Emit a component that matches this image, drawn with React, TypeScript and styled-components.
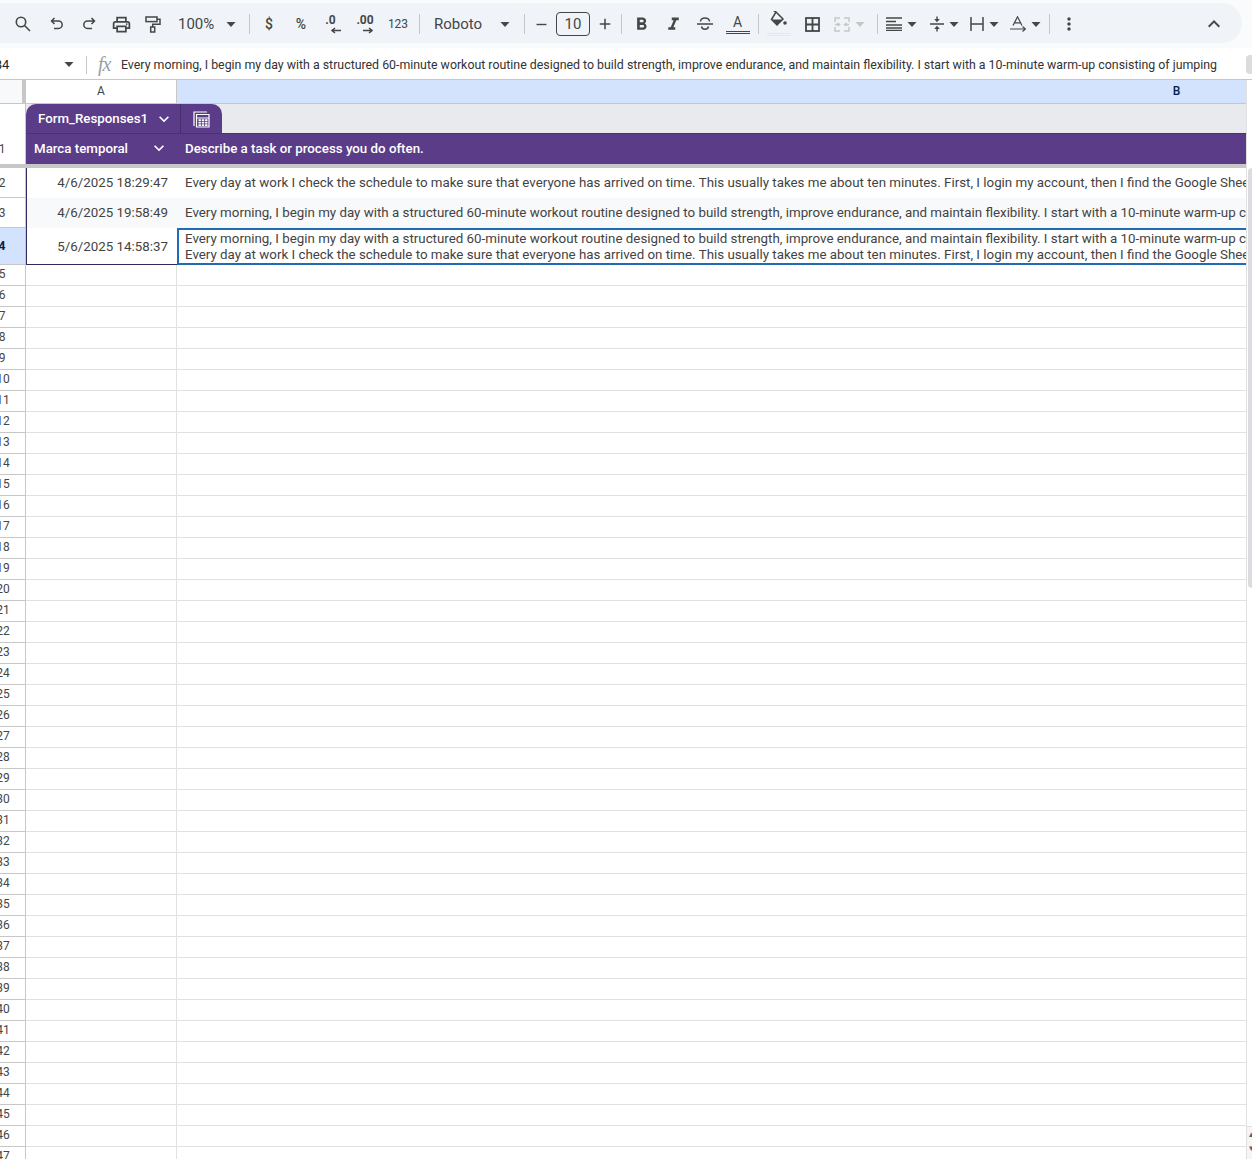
import React from "react";
import styled, { createGlobalStyle } from "styled-components";
import { MdOutlinePrint, MdFormatBold, MdFormatItalic, MdMoreVert, MdKeyboardArrowUp, MdKeyboardArrowDown, MdAdd, MdRemove } from "react-icons/md";

const INK = "#444746";
const PURPLE = "#5b3c88";
const LINE = "#e1e1e1";
const GUTTER_LINE = "#c7c7c7";

const Global = createGlobalStyle`
  html, body { margin: 0; padding: 0; background: #f9fbfd; }
  body { font-family: Roboto, "Liberation Sans", sans-serif; color: #444746; }
`;

const Page = styled.div`
  width: 1252px; height: 1159px; overflow: hidden; display: flex; flex-direction: column; background: #f9fbfd;
`;
const ToolbarWrap = styled.div`
  height: 48px; padding: 3px 10px 5px 0; box-sizing: border-box; flex: none;
`;
const Toolbar = styled.div`
  height: 40px; box-sizing: border-box; border-radius: 0 20px 20px 0; background: #f0f4f9; display: flex; align-items: center; padding: 2px 12px 0 7px;
`;
const Tool = styled.div<{ $w?: number; $disabled?: boolean }>`
  width: ${p => p.$w ?? 32}px; height: 32px; flex: none; display: flex; align-items: center; justify-content: center; color: ${p => p.$disabled ? "#c4c7c5" : INK};
`;
const SearchTool = styled(Tool)`
  margin-right: 2px;
`;
const Glyph = styled(Tool)<{ $size?: number; $weight?: number }>`
  font-size: ${p => p.$size ?? 14}px; font-weight: ${p => p.$weight ?? 400};
`;
const DecimalTool = styled(Tool)`
  flex-direction: column; gap: 1px; font-size: 12px; font-weight: 700; line-height: 11px; box-sizing: border-box;
`;
const DecimalText = styled.span<{ $shift: number }>`
  margin-right: ${p => p.$shift}px;
`;
const Select = styled.div<{ $w: number; $pad: number; $gap: number }>`
  width: ${p => p.$w}px; height: 32px; flex: none; box-sizing: border-box; padding-left: ${p => p.$pad}px; display: flex; align-items: center; gap: ${p => p.$gap}px; font-size: 15px; color: ${INK};
`;
const Sep = styled.div<{ $l: number; $r: number }>`
  width: 1px; height: 20px; background: #c7c7c7; flex: none; margin: 0 ${p => p.$r}px 0 ${p => p.$l}px;
`;
const SizeBox = styled.div`
  width: 34px; height: 24px; box-sizing: border-box; border: 1px solid ${INK}; border-radius: 4px; flex: none; display: flex; align-items: center; justify-content: center; font-size: 15px; color: ${INK}; margin: 0 1px;
`;
const Dropdown = styled.div<{ $w: number; $disabled?: boolean }>`
  width: ${p => p.$w}px; height: 32px; flex: none; display: flex; align-items: center; padding-left: 5px; box-sizing: border-box; gap: 5px; color: ${p => p.$disabled ? "#c4c7c5" : INK};
`;
const ColorA = styled.div`
  display: flex; flex-direction: column; align-items: center; width: 32px; font-size: 14px; line-height: 14px; color: ${INK};
`;
const ColorBar = styled.div`
  width: 24px; height: 1px; margin: 2px 0; background: ${INK}; box-shadow: 0 2px 0 ${INK};
`;
const Collapse = styled(Tool)`
  margin-left: auto;
`;

const FormulaBar = styled.div`
  height: 32px; flex: none; display: flex; align-items: center; background: #fff; position: relative; border-bottom: 1px solid #c4c7c5; box-sizing: border-box; padding-top: 2px;
`;
const NameBox = styled.div`
  width: 86px; flex: none; display: flex; align-items: center; justify-content: space-between; padding-right: 12px; box-sizing: border-box; font-size: 13px; overflow: hidden; color: #1f1f1f;
`;
const NameText = styled.span`
  margin-left: -6px;
`;
const FxSep = styled.div`
  width: 1px; height: 18px; background: #c7c7c7; flex: none;
`;
const Fx = styled.span`
  font-family: "Liberation Serif", serif; font-style: italic; font-size: 20px; line-height: 18px; color: #9aa0a6; width: 34px; flex: none; text-align: left; padding: 0 0 2px 11px; box-sizing: border-box; letter-spacing: -1px;
`;
const FormulaText = styled.div`
  flex: 1; min-width: 0; font-size: 12.36px; color: #333; white-space: nowrap; overflow: hidden;
`;
const ExpandHandle = styled.div`
  width: 6px; height: 19px; background: #dadce0; border-radius: 4px 0 0 4px; flex: none;
`;

const Body = styled.div`
  flex: 1; display: flex; min-height: 0;
`;
const Sheet = styled.div`
  flex: 1; min-width: 0; overflow: hidden; background: #fff;
`;
const Rail = styled.div`
  width: 6px; flex: none; background: #fff; border-left: 1px solid ${LINE}; box-sizing: border-box; display: flex; flex-direction: column;
`;
const Thumb = styled.div`
  margin: 88px 0 0 1px; height: 420px; background: #dadce0; border-radius: 4px 0 0 4px; flex: none;
`;
const RailArrow = styled.div`
  margin-top: auto; height: 32px; border-top: 1px solid ${LINE}; background: #f5f5f5; font-size: 9px; line-height: 14px; color: #5f6368; padding-left: 2px; overflow: hidden;
`;

const Row = styled.div<{ $h: number }>`
  display: flex; height: ${p => p.$h}px; width: 2246px;
`;
const Gutter = styled.div<{ $state?: "selected" | "plain"; $line?: boolean }>`
  width: 26px; flex: none; box-sizing: border-box; overflow: hidden; display: flex; align-items: center; justify-content: flex-start;
  font-size: 12px; background: ${p => p.$state === "selected" ? "#d3e3fd" : "#fff"};
  font-weight: ${p => p.$state === "selected" ? 700 : 400};
  color: ${p => p.$state === "selected" ? "#041e49" : INK};
  border-right: 1px solid ${GUTTER_LINE};
  border-bottom: ${p => p.$line === false ? "none" : `1px solid ${GUTTER_LINE}`};
`;
const GutterNum = styled.span<{ $lift?: boolean; $wide?: boolean }>`
  flex: none; width: 50px; margin: ${p => p.$lift ? "-2px" : "0"} 0 0 ${p => p.$wide ? "-22px" : "-23px"}; text-align: center;
`;
const CornerCell = styled.div`
  width: 26px; flex: none; box-sizing: border-box; background: #f8f9fa; border-right: 4px solid ${GUTTER_LINE}; border-bottom: 1px solid ${GUTTER_LINE};
`;
const ColHead = styled.div<{ $w: number; $on?: boolean }>`
  width: ${p => p.$w}px; flex: none; box-sizing: border-box; display: flex; align-items: center; justify-content: center;
  font-size: 12px; padding-bottom: 1px; border-bottom: 1px solid ${GUTTER_LINE}; border-right: 1px solid ${GUTTER_LINE};
  background: ${p => p.$on ? "#d3e3fd" : "#fff"}; color: ${p => p.$on ? "#041e49" : INK}; font-weight: ${p => p.$on ? 500 : 400};
`;
const TitleBand = styled.div`
  flex: 1; background: #e8eaed; display: flex;
`;
const TableTab = styled.div`
  width: 196px; height: 29px; background: ${PURPLE}; border-radius: 10px 10px 0 0; display: flex; color: #fff; flex: none;
`;
const TabName = styled.div`
  width: 155px; flex: none; box-sizing: border-box; border-right: 1px solid #46306c; display: flex; align-items: center; padding-left: 12px; font-size: 13.3px; font-weight: 500; gap: 6px;
`;
const TabIcon = styled.div`
  flex: 1; display: flex; align-items: center; justify-content: center; padding-top: 1px;
`;
const HeadCell = styled.div<{ $w: number }>`
  width: ${p => p.$w}px; flex: none; box-sizing: border-box; background: ${PURPLE}; color: #fff; font-size: 13.3px; font-weight: 500; padding: 0 8px 2px; display: flex; align-items: center; justify-content: space-between; border-top: 1px solid #4a3170; white-space: nowrap;
`;
const FreezeBand = styled.div`
  height: 4px; background: #c7c7c7; flex: none; width: 100%;
`;
const TableCell = styled.div<{ $alt?: boolean; $w: number; $right?: boolean; $end?: boolean }>`
  width: ${p => p.$w}px; flex: none; box-sizing: border-box; padding: ${p => p.$end ? "2px" : "0"} ${p => p.$right ? "9px" : "8px"} 0 8px; background: ${p => p.$alt ? "#f8f9fa" : "#fff"};
  font-size: 13.33px; line-height: 16px; color: #434343; white-space: nowrap; overflow: hidden; display: flex; flex-direction: column; justify-content: center;
  text-align: ${p => p.$right ? "right" : "left"};
  border-left: ${p => p.$right ? "1px solid #35285f" : "none"};
  border-bottom: ${p => p.$end ? "1px solid #35285f" : "none"};
`;
const ActiveCell = styled(TableCell)`
  border: 2px solid #1f6cb5; padding: 0 6px; background: #fff;
`;
const EmptyCell = styled.div<{ $w: number }>`
  width: ${p => p.$w}px; flex: none; box-sizing: border-box; border-right: 1px solid ${LINE}; border-bottom: 1px solid ${LINE};
`;

const Caret = () => (
  <svg width="10" height="5" viewBox="0 0 10 5"><path d="M0.5 0 H9.5 L5 5 Z" fill={INK} /></svg>
);
const GreyCaret = () => (
  <svg width="10" height="5" viewBox="0 0 10 5"><path d="M0.5 0 H9.5 L5 5 Z" fill="#c4c7c5" /></svg>
);
const Stroke: React.FC<{ w: number; h: number; children: React.ReactNode; c?: string; sw?: number }> = ({ w, h, children, c = INK, sw = 1.5 }) => (
  <svg width={w} height={h} viewBox={`0 0 ${w} ${h}`} fill="none" stroke={c} strokeWidth={sw}>{children}</svg>
);

const FILL = "Every morning, I begin my day with a structured 60-minute workout routine designed to build strength, improve endurance, and maintain flexibility. I start with a 10-minute warm-up consisting of jumping";
const WORK = "Every day at work I check the schedule to make sure that everyone has arrived on time. This usually takes me about ten minutes. First, I login my account, then I find the Google Sheet where the schedule is stored and check each name";
const EMPTY = Array.from({ length: 43 }, (_, i) => i + 5);

export default function App() {
  return (
    <Page>
      <Global />
      <ToolbarWrap>
        <Toolbar>
          <SearchTool>
            <Stroke w={16} h={16} sw={1.6}><circle cx="6" cy="6" r="4.7" /><path d="M9.5 9.5 L15 15" /></Stroke>
          </SearchTool>
          <Tool>
            <Stroke w={14} h={14}><path d="M4.5 1 L1.5 4 L4.5 7 M1.5 4 H8.5 a3.6 3.6 0 0 1 0 7.4 H4" /></Stroke>
          </Tool>
          <Tool>
            <Stroke w={14} h={14}><path d="M9.5 1 L12.5 4 L9.5 7 M12.5 4 H5.5 a3.6 3.6 0 0 0 0 7.4 H10" /></Stroke>
          </Tool>
          <Tool><MdOutlinePrint size={21} /></Tool>
          <Tool>
            <Stroke w={16} h={17}><rect x="1" y="1" width="11" height="4.6" /><path d="M12 3.2 H15 V8.2 H7.7 V11" /><rect x="5.7" y="11" width="4" height="5" /></Stroke>
          </Tool>
          <Select $w={73} $pad={9} $gap={12}>100%<Caret /></Select>
          <Sep $l={7} $r={3} />
          <Glyph $size={14} $weight={500}>$</Glyph>
          <Glyph $size={14} $weight={500}>%</Glyph>
          <DecimalTool>
            <DecimalText $shift={5}>.0</DecimalText>
            <Stroke w={16} h={7}><path d="M16 3.5 H7 M10 1 L7 3.5 L10 6" /></Stroke>
          </DecimalTool>
          <DecimalTool>
            <DecimalText $shift={0}>.00</DecimalText>
            <Stroke w={16} h={7}><path d="M6 3.5 H15 M12 1 L15 3.5 L12 6" /></Stroke>
          </DecimalTool>
          <Glyph $w={34} $size={12}>123</Glyph>
          <Sep $l={4} $r={4} />
          <Select $w={94} $pad={10} $gap={18}>Roboto<Caret /></Select>
          <Sep $l={6} $r={2} />
          <Tool $w={28}><MdRemove size={17} /></Tool>
          <SizeBox>10</SizeBox>
          <Tool $w={28}><MdAdd size={18} /></Tool>
          <Sep $l={2} $r={3} />
          <Tool><MdFormatBold size={21} /></Tool>
          <Tool><MdFormatItalic size={21} /></Tool>
          <Tool>
            <Stroke w={18} h={14}><path d="M1 7 H17 M4.5 4.5 a4.5 3.6 0 0 1 9 0 M5.5 9.5 a3.6 3.6 0 0 0 7 0" /></Stroke>
          </Tool>
          <Tool $w={33}><ColorA>A<ColorBar /></ColorA></Tool>
          <Sep $l={4} $r={4} />
          <Tool>
            <svg width="24" height="26" viewBox="0 0 24 26">
              <path d="M10 2 L6.5 -0.5 M9 1 L16 8 L10 14 L4.5 8.5 Z" fill="none" stroke={INK} strokeWidth="1.5" />
              <path d="M5 8.5 H15.5 L10 14 Z" fill={INK} />
              <circle cx="18" cy="12" r="1.8" fill={INK} />
              <path d="M0 22.5 H24 M0 24.5 H24" stroke="#e6e8ea" strokeWidth="1" />
            </svg>
          </Tool>
          <Tool $w={34}>
            <Stroke w={15} h={15} sw={1.8}><rect x="1" y="1" width="13" height="13" /><path d="M7.5 1 V14 M1 7.5 H14" /></Stroke>
          </Tool>
          <Dropdown $w={47} $disabled>
            <Stroke w={16} h={15} c="#c4c7c5"><path d="M6 1 H1 V5 M1 10 V14 H6 M10 1 H15 V5 M15 10 V14 H10 M1 7.5 H5 M3.5 6 L5.5 7.5 L3.5 9 M15 7.5 H11 M12.5 6 L10.5 7.5 L12.5 9" /></Stroke>
            <GreyCaret />
          </Dropdown>
          <Sep $l={1} $r={3} />
          <Dropdown $w={44}>
            <Stroke w={16} h={14} sw={1.5}><path d="M0 1 H16 M0 4.5 H10 M0 8 H16 M0 11 H16 M0 13.5 H16" /></Stroke>
            <Caret />
          </Dropdown>
          <Dropdown $w={40}>
            <svg width="14" height="16" viewBox="0 0 14 16">
              <path d="M0 8 H14 M7 0.5 V3 M7 15.5 V13" stroke={INK} strokeWidth="1.4" fill="none" />
              <path d="M4.2 3 H9.8 L7 6.2 Z M4.2 13 H9.8 L7 9.8 Z" fill={INK} />
            </svg>
            <Caret />
          </Dropdown>
          <Dropdown $w={40}>
            <Stroke w={14} h={14}><path d="M1 0 V14 M13 0 V14 M1 7 H13" /></Stroke>
            <Caret />
          </Dropdown>
          <Dropdown $w={40}>
            <Stroke w={16} h={16} sw={1.2}><path d="M3 9.5 L7.5 0.8 L12 9.5 M4.5 6.8 H10.5 M0 13 H15 M12.5 10.5 L15.5 13 L12.5 15.5" /></Stroke>
            <Caret />
          </Dropdown>
          <Sep $l={4} $r={3} />
          <Tool><MdMoreVert size={20} /></Tool>
          <Collapse><MdKeyboardArrowUp size={24} /></Collapse>
        </Toolbar>
      </ToolbarWrap>

      <FormulaBar>
        <NameBox><NameText>B4</NameText><Caret /></NameBox>
        <FxSep />
        <Fx>fx</Fx>
        <FormulaText>{FILL}</FormulaText>
        <ExpandHandle />
      </FormulaBar>

      <Body>
        <Sheet>
          <Row $h={24}>
            <CornerCell />
            <ColHead $w={151}>A</ColHead>
            <ColHead $w={2000} $on>B</ColHead>
          </Row>
          <Row $h={29}>
            <Gutter $line={false} />
            <TitleBand>
              <TableTab>
                <TabName>Form_Responses1<MdKeyboardArrowDown size={20} /></TabName>
                <TabIcon>
                  <svg width="17" height="17" viewBox="0 0 17 17" fill="none" stroke="#fff">
                    <path d="M1 15 V1 H14" strokeWidth="1.2" />
                    <path d="M3.5 3.5 H16 V16 H3.5 Z M3.5 7 H16" strokeWidth="1.2" />
                    <path d="M5.5 9.2 H14.5 M5.5 11.7 H14.5 M5.5 14.2 H14.5" strokeWidth="1.7" strokeDasharray="2.4 0.9" />
                  </svg>
                </TabIcon>
              </TableTab>
            </TitleBand>
          </Row>
          <Row $h={31}>
            <Gutter $line={false}><GutterNum>1</GutterNum></Gutter>
            <HeadCell $w={151}>Marca temporal<MdKeyboardArrowDown size={20} /></HeadCell>
            <HeadCell $w={2000}>Describe a task or process you do often.</HeadCell>
          </Row>
          <FreezeBand />
          <Row $h={30}>
            <Gutter><GutterNum>2</GutterNum></Gutter>
            <TableCell $w={151} $right>4/6/2025 18:29:47</TableCell>
            <TableCell $w={2000}>{WORK}</TableCell>
          </Row>
          <Row $h={30}>
            <Gutter><GutterNum>3</GutterNum></Gutter>
            <TableCell $w={151} $right $alt>4/6/2025 19:58:49</TableCell>
            <TableCell $w={2000} $alt>{FILL}</TableCell>
          </Row>
          <Row $h={37}>
            <Gutter $state="selected"><GutterNum>4</GutterNum></Gutter>
            <TableCell $w={151} $right $end>5/6/2025 14:58:37</TableCell>
            <ActiveCell $w={2000}>
              <span>{FILL}</span>
              <span>{WORK}</span>
            </ActiveCell>
          </Row>
          {EMPTY.map(n => (
            <Row key={n} $h={21}>
              <Gutter><GutterNum $lift $wide={n >= 10}>{n}</GutterNum></Gutter>
              <EmptyCell $w={151} />
              <EmptyCell $w={2000} />
            </Row>
          ))}
        </Sheet>
        <Rail>
          <Thumb />
          <RailArrow>▴<br />▾</RailArrow>
        </Rail>
      </Body>
    </Page>
  );
}
